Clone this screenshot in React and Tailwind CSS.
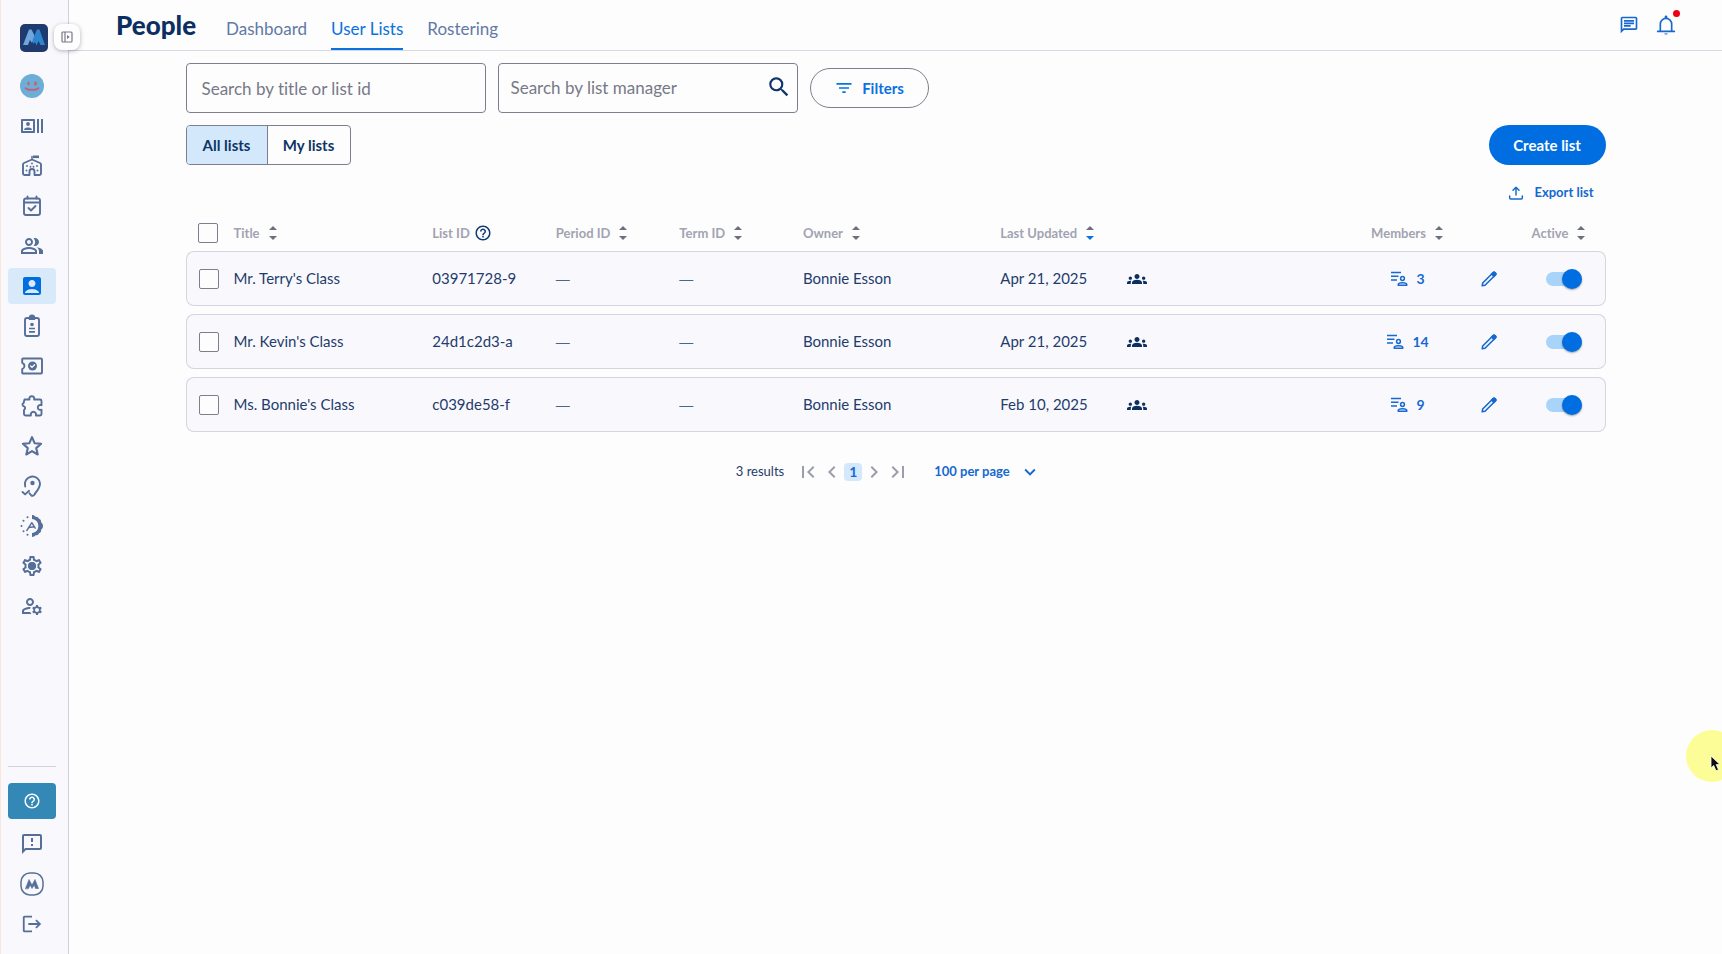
import React from "react";
import {
  MdOutlineRecentActors, MdOutlinePeopleAlt, MdAccountBox,
  MdOutlineSettings, MdOutlineManageAccounts, MdHelpOutline,
  MdOutlineFeedback, MdLogout, MdGroups, MdFilterList, MdSearch, MdOutlineChat,
  MdFirstPage, MdLastPage, MdChevronLeft, MdChevronRight, MdExpandMore,
} from "react-icons/md";

function Svg({ size = 24, children, className = "" }) {
  return (
    <svg width={size} height={size} viewBox="0 0 24 24" fill="none" stroke="currentColor" strokeWidth="2" strokeLinecap="round" strokeLinejoin="round" className={className} aria-hidden="true">
      {children}
    </svg>
  );
}

const CampusIcon = () => (
  <Svg>
    <path d="M9.5 21H4.5a1.500 1.500 0 0 1-1.500-1.500V10.500c0-.7.400-1.200 1-1.500L12 5.500 20 9c.6.300 1 .8 1 1.500v9a1.500 1.500 0 0 1-1.500 1.500h-5v-3.500a2.500 2.500 0 0 0-5 0V21Z" strokeWidth="1.900" />
    <path d="M12 5.500V2.500" strokeWidth="1.500" />
    <path d="M13 1.500h6v2.600h-6z" fill="currentColor" stroke="none" />
    <path d="M7 12h.01M12 9.500h.01M17 12h.01M10.500 12.800h.01M13.500 12.800h.01M6.500 16.500h.01M17.500 16.500h.01" strokeWidth="1.900" />
  </Svg>
);

const CalendarCheckIcon = () => (
  <Svg>
    <rect x="4" y="4.500" width="16" height="16.500" rx="2" strokeWidth="1.900" />
    <path d="M4 8.500h16M7.500 2.500v2M16.500 2.500v2" strokeWidth="1.900" />
    <path d="m8.500 14 2.500 2.500 4.500-4.500" strokeWidth="1.900" />
  </Svg>
);

const BadgeIcon = () => (
  <Svg>
    <rect x="5" y="4" width="14" height="18" rx="2" strokeWidth="1.900" />
    <path d="M8.800 6V3.600a3.200 3.200 0 0 1 6.400 0V6z" fill="currentColor" stroke="none" />
    <circle cx="12" cy="10.500" r="1.800" fill="currentColor" stroke="none" />
    <path d="M9 14.500h6M9 17.800h6" strokeWidth="1.700" strokeLinecap="butt" />
  </Svg>
);

const TicketIcon = () => (
  <Svg>
    <path d="M3 4.500h18a1 1 0 0 1 1 1v13a1 1 0 0 1-1 1H3a.8.8 0 0 1-.8-.8v-3.500c3-1.200 3-5.200 0-6.400V5.300c0-.5.300-.8.800-.8Z" strokeWidth="1.900" />
    <circle cx="12.500" cy="12" r="4.500" fill="currentColor" stroke="none" />
    <path d="m10.600 12 1.400 1.400 2.600-2.700" stroke="#f9f9fd" strokeWidth="1.300" />
  </Svg>
);

const PuzzleIcon = () => (
  <Svg>
    <path d="M4.500 5.500h5c-.7-2 .6-3.300 2.300-3.300s3 1.300 2.300 3.300h6a1.400 1.400 0 0 1 1.400 1.400v4.300c-2-.8-3.700.4-3.700 2.200s1.700 3 3.700 2.300v4.400a1.400 1.400 0 0 1-1.400 1.400h-4.200c.5-2-.7-3.700-2.500-3.700s-3 1.700-2.500 3.700H5.500A1.500 1.500 0 0 1 4 20v-4c1.500-.9 1.500-3 0-3.600-2-.7-2-2.700-.4-3.300Z" strokeWidth="1.900" />
  </Svg>
);

const StarIcon = () => (
  <Svg>
    <path d="m12 3.200 2.600 6 6.500.6-4.900 4.300 1.500 6.400-5.700-3.400-5.700 3.400 1.500-6.400-4.900-4.300 6.500-.6Z" strokeWidth="2.100" />
  </Svg>
);

const EarPinIcon = () => (
  <Svg>
    <path d="M5.200 12.500A7.600 7.600 0 1 1 20 9.500c0 4.800-3.500 7.500-5.700 11.300-.8 1.300-2.300 1.200-3.200.4-.6-.6-1.200-1.300-1.600-2" strokeWidth="1.900" />
    <circle cx="12.500" cy="9" r="2.200" fill="currentColor" stroke="none" />
    <path d="m2.500 18 2.600 2.400 4-3.600" strokeWidth="1.900" />
  </Svg>
);

const AutoModeIcon = () => (
  <Svg>
    <path d="M12 1c1.500 0 2.800.6 3.500 1.700 1.400-.3 2.900.4 3.500 2 1.600.6 2.300 1.900 2.100 3.500 1.100.8 1.900 2.200 1.900 3.800s-.8 3-1.900 3.800c.2 1.600-.5 2.900-2.100 3.500-.6 1.600-2.100 2.300-3.500 2-.7 1.100-2 1.700-3.500 1.700v-4c8.500-.5 8.500-13.500 0-14Z" fill="currentColor" stroke="none" />
    <path d="M7.500 3.200h.01M3.500 6.800h.01M1.500 12h.01M3.500 17.200h.01M7.500 20.800h.01" strokeWidth="2" />
    <path d="m6.800 16.500 5-7.800 3.400 5.500M9 13.500l5-.8" strokeWidth="1.400" />
  </Svg>
);

const SettingsIcon = () => (
  <span className="relative block">
    <MdOutlineSettings size={24} />
    <span className="absolute inset-0 m-auto size-2 rounded-full bg-current" />
  </span>
);

const MarkIcon = () => (
  <Svg>
    <rect x="1" y="1" width="22" height="22" rx="9" strokeWidth="1.500" />
    <path d="M5.500 16.500 9 7.500l3 5.500 3-5.500 3.500 9h-3l-1.200-3.500L12 16.500l-1.800-3.500-1.700 3.500Z" fill="currentColor" strokeWidth=".6" />
  </Svg>
);

const BellIcon = () => (
  <Svg size={22}>
    <path d="M5.800 18.500V11a6.200 6.200 0 0 1 12.400 0v7.500" strokeWidth="1.800" />
    <path d="M3 19h18" strokeWidth="2" />
    <path d="M10.500 4.500V3a1.500 1.500 0 0 1 3 0v1.500zM10 21.300h4c-.4 1.500-3.600 1.500-4 0Z" fill="currentColor" stroke="none" />
  </Svg>
);

const UploadIcon = () => (
  <Svg size={16}>
    <path d="M2.500 16.500v3a1.500 1.500 0 0 0 1.500 1.500h16a1.500 1.500 0 0 0 1.500-1.500v-3" strokeWidth="2.200" />
    <path d="M12 15V3.500M7.500 8 12 3.500 16.500 8" strokeWidth="2.200" />
  </Svg>
);

const MemberListIcon = () => (
  <svg width="18" height="18" viewBox="0 0 18 18" fill="none" stroke="currentColor" strokeWidth="1.500" aria-hidden="true">
    <path d="M1 2.500h10M1 6.200h7.500M1 10h6" />
    <circle cx="12.500" cy="8.500" r="1.900" />
    <path d="M8.200 15.300v-.6c0-1.300 2-2 4.300-2s4.300.7 4.300 2v.6Z" strokeLinejoin="round" />
  </svg>
);

const PencilIcon = () => (
  <svg width="16" height="16" viewBox="0 0 16 16" fill="none" stroke="currentColor" strokeWidth="1.600" strokeLinejoin="round" aria-hidden="true">
    <path d="M1.200 14.800 1.700 12 12 1.700a1.300 1.300 0 0 1 1.800 0l.5.500a1.300 1.300 0 0 1 0 1.800L4 14.300Z" />
    <path d="m10.600 3.100 1.600-1.600c.5-.5 1.200-.5 1.700 0l.6.600c.5.500.5 1.200 0 1.700L12.900 5.400Z" fill="currentColor" />
  </svg>
);

const PanelIcon = () => (
  <svg width="12" height="12" viewBox="0 0 12 12" fill="none" stroke="currentColor" aria-hidden="true">
    <rect x="1" y="1" width="10" height="10" rx="1" strokeWidth="1.200" />
    <path d="M4 1v10" strokeWidth="1.200" />
    <path d="M6 4v4l2.700-2z" fill="currentColor" stroke="none" />
  </svg>
);

const Logo = () => (
  <svg width="28" height="28" viewBox="0 0 28 28" aria-hidden="true">
    <rect width="28" height="28" rx="5" fill="#1f3a6e" />
    <path d="m3 21 6-15.500h2.500l3.500 7-3 6.500-2-3L8 21Z" fill="#6fa6dc" />
    <path d="m12.500 16 4.500-10.500h2.500L25 21h-4.500L18.500 17l-2 4.500-1.500-3.500-1.500 2Z" fill="#2f84cf" />
  </svg>
);

const Avatar = () => (
  <svg width="24" height="24" viewBox="0 0 24 24" aria-hidden="true">
    <circle cx="12" cy="12" r="12" fill="#6bafd6" />
    <path d="M8.500 7.500v4M15.500 7.500v4M7 9.500h3M14 8.500l3 2M17 8.500l-3 2" stroke="#cf5a78" strokeWidth="1.200" />
    <path d="M5 13.500c2 3.300 12 3.300 14 0" fill="none" stroke="#cf5a78" strokeWidth="1.500" />
    <path d="M7 15.300h10" stroke="#cf5a78" strokeWidth="1" />
  </svg>
);

const navItems = [
  { label: "Profile", icon: <Avatar /> },
  { label: "Directory", icon: <MdOutlineRecentActors size={24} /> },
  { label: "Campus", icon: <CampusIcon /> },
  { label: "Calendar", icon: <CalendarCheckIcon /> },
  { label: "Groups", icon: <MdOutlinePeopleAlt size={24} /> },
  { label: "People", icon: <MdAccountBox size={24} />, active: true },
  { label: "Badges", icon: <BadgeIcon /> },
  { label: "Passes", icon: <TicketIcon /> },
  { label: "Extensions", icon: <PuzzleIcon /> },
  { label: "Favorites", icon: <StarIcon /> },
  { label: "Locations", icon: <EarPinIcon /> },
  { label: "Automations", icon: <AutoModeIcon /> },
  { label: "Settings", icon: <SettingsIcon /> },
  { label: "Account management", icon: <MdOutlineManageAccounts size={24} /> },
];

const footerItems = [
  { label: "Feedback", icon: <MdOutlineFeedback size={24} /> },
  { label: "About", icon: <MarkIcon /> },
  { label: "Log out", icon: <MdLogout size={22} /> },
];

function Sidebar() {
  return (
    <aside className="relative flex w-[69px] shrink-0 flex-col border-x border-r-[#cfd0da] border-l-[#fce6dc] bg-[#f9f9fd] pt-6 pb-3 pl-[7px]">
      <a href="#home" aria-label="Home" className="ml-3 w-7"><Logo /></a>
      <button aria-label="Expand sidebar" className="absolute top-6 -right-3 z-10 flex size-[26px] items-center justify-center rounded-lg bg-[#fdfdfd] text-[#77798a] shadow-[0_1px_4px_rgba(40,40,70,0.35)]">
        <PanelIcon />
      </button>
      <nav aria-label="Main" className="mt-4 flex w-12 flex-1 flex-col gap-1">
        {navItems.map((item) => (
          <a key={item.label} href="#nav" aria-label={item.label}
            className={item.active
              ? "flex h-9 items-center justify-center rounded bg-[#d8eafa] text-[#006ee0]"
              : "flex h-9 items-center justify-center text-[#566f98]"}>
            {item.icon}
          </a>
        ))}
      </nav>
      <div className="flex w-12 flex-col gap-1 border-t border-[#cfd3df] pt-4">
        <button aria-label="Help" className="mb-[3px] flex h-9 items-center justify-center rounded bg-[#3388b6] text-white">
          <MdHelpOutline size={18} />
        </button>
        {footerItems.map((item) => (
          <a key={item.label} href="#nav" aria-label={item.label} className="flex h-9 items-center justify-center text-[#566f98]">
            {item.icon}
          </a>
        ))}
      </div>
    </aside>
  );
}

function Header() {
  return (
    <header className="flex h-[51px] items-stretch border-b border-[#d5d8e0] pr-[45px] pl-[47px]">
      <h1 className="mr-[30px] flex items-center text-[26px] font-black text-[#0c2f62]">People</h1>
      <nav aria-label="People sections" className="flex gap-6 text-[17px] text-[#6079a6]">
        <a href="#dashboard" className="flex items-center border-b-2 border-transparent pt-2.5">Dashboard</a>
        <a href="#lists" aria-current="page" className="flex items-center border-b-2 border-[#0a72e0] pt-2.5 text-[#0a72e0]">User Lists</a>
        <a href="#rostering" className="flex items-center border-b-2 border-transparent pt-2.5">Rostering</a>
      </nav>
      <div className="ml-auto flex items-center gap-4 text-[#1569d0]">
        <button aria-label="Messages"><MdOutlineChat size={20} /></button>
        <button aria-label="Notifications" className="relative">
          <BellIcon />
          <span className="absolute -top-1 -right-[3px] size-[7px] rounded-full bg-[#ee0011]" />
        </button>
      </div>
    </header>
  );
}

function SortIcon({ down = false }) {
  return (
    <svg width="10" height="16" viewBox="0 0 10 16" aria-hidden="true">
      <path d="M1 5 5 1l4 4Z" fill="#6d6f7e" />
      <path d="M1 11 5 15l4-4Z" fill={down ? "#0a72e0" : "#6d6f7e"} />
    </svg>
  );
}

function SortHeader({ label, down, center }) {
  return (
    <button className={center
      ? "mx-auto flex items-center gap-2 font-bold whitespace-nowrap"
      : "flex items-center gap-2 font-bold whitespace-nowrap"}>
      {label}
      <SortIcon down={down} />
    </button>
  );
}

const box = "block size-5 appearance-none rounded-xs border border-[#7d7f8e] bg-[#fdfdfd] checked:bg-[#006ee0]";

const lists = [
  { title: "Mr. Terry's Class", id: "03971728-9", owner: "Bonnie Esson", updated: "Apr 21, 2025", members: 3 },
  { title: "Mr. Kevin's Class", id: "24d1c2d3-a", owner: "Bonnie Esson", updated: "Apr 21, 2025", members: 14 },
  { title: "Ms. Bonnie's Class", id: "c039de58-f", owner: "Bonnie Esson", updated: "Feb 10, 2025", members: 9 },
];

function ListTable() {
  const cell = "border-y border-[#d3d5e0] p-0";
  const dash = "border-y border-[#d3d5e0] p-0 font-['Liberation_Sans',sans-serif] text-sm text-[#4a6590]";
  return (
    <table className="w-full table-fixed border-separate border-spacing-x-0 border-spacing-y-2 text-left text-[15px] text-[#1f3c6c]">
      <colgroup>
        <col className="w-12" />
        <col className="w-[14%]" />
        <col className="w-[8.7%]" />
        <col className="w-[8.7%]" />
        <col className="w-[8.7%]" />
        <col className="w-[13.9%]" />
        <col className="w-[7.8%]" />
        <col />
        <col className="w-[114px]" />
        <col className="w-12" />
        <col className="w-[93px]" />
      </colgroup>
      <thead>
        <tr className="h-5 text-[13px] leading-5 text-[#a2a3b2]">
          <th className="p-0 pl-3"><input type="checkbox" aria-label="Select all lists" className={box} /></th>
          <th className="p-0"><SortHeader label="Title" /></th>
          <th className="p-0">
            <div className="flex items-center gap-1">
              List ID
              <button aria-label="About list ID" className="text-[#0f3a73]"><MdHelpOutline size={18} /></button>
            </div>
          </th>
          <th className="p-0"><SortHeader label="Period ID" /></th>
          <th className="p-0"><SortHeader label="Term ID" /></th>
          <th className="p-0"><SortHeader label="Owner" /></th>
          <th className="p-0" colSpan={2}><SortHeader label="Last Updated" down /></th>
          <th className="p-0"><SortHeader label="Members" center /></th>
          <td className="p-0" />
          <th className="p-0"><SortHeader label="Active" center /></th>
        </tr>
      </thead>
      <tbody>
        {lists.map((list) => (
          <tr key={list.id} className="h-[55px] bg-[#f9f9fd]">
            <td className="rounded-l-lg border-y border-l border-[#d3d5e0] p-0 pl-3">
              <input type="checkbox" aria-label={`Select ${list.title}`} className={box} />
            </td>
            <td className={cell}>{list.title}</td>
            <td className={cell}>{list.id}</td>
            <td className={dash}>—</td>
            <td className={dash}>—</td>
            <td className={cell}>{list.owner}</td>
            <td className={cell}>{list.updated}</td>
            <td className="border-y border-[#d3d5e0] p-0 pl-4 text-[#0c2f62]"><MdGroups size={20} /></td>
            <td className={cell}>
              <a href="#members" className="flex items-center justify-center gap-2 text-sm font-bold text-[#1569d0]">
                <MemberListIcon />
                {list.members}
              </a>
            </td>
            <td className={cell}>
              <button aria-label={`Edit ${list.title}`} className="mx-auto block text-[#1569d0]"><PencilIcon /></button>
            </td>
            <td className="rounded-r-lg border-y border-r border-[#d3d5e0] p-0 pl-[33px]">
              <label className="flex h-5 w-9 items-center">
                <input type="checkbox" defaultChecked role="switch" aria-label={`${list.title} active`} className="peer sr-only" />
                <span className="flex h-[14px] w-9 items-center rounded-full bg-[#a9d4fa] peer-checked:justify-end">
                  <span className="size-5 rounded-full bg-[#006ee0] shadow-[0_1px_2px_rgba(0,0,0,0.35)]" />
                </span>
              </label>
            </td>
          </tr>
        ))}
      </tbody>
    </table>
  );
}

function Pagination() {
  return (
    <nav aria-label="Pagination" className="mt-5 flex items-center justify-center pr-3.5 text-[13px] text-[#1f3c6c]">
      <span className="mr-3">3 results</span>
      <div className="flex items-center text-[#9b9dab]">
        <button aria-label="First page"><MdFirstPage size={24} /></button>
        <button aria-label="Previous page"><MdChevronLeft size={24} /></button>
        <button aria-current="page" className="h-[18px] w-[18px] rounded bg-[#d3e9fb] text-sm leading-[18px] font-bold text-[#1569d0]">1</button>
        <button aria-label="Next page"><MdChevronRight size={24} /></button>
        <button aria-label="Last page"><MdLastPage size={24} /></button>
      </div>
      <div className="relative ml-6 flex items-center text-[#1569d0]">
        <select aria-label="Rows per page" className="w-[107px] appearance-none bg-transparent pr-6 font-bold" defaultValue="100">
          <option value="25">25 per page</option>
          <option value="50">50 per page</option>
          <option value="100">100 per page</option>
        </select>
        <MdExpandMore size={22} className="pointer-events-none absolute right-0" />
      </div>
    </nav>
  );
}

export default function App() {
  return (
    <div className="relative flex min-h-screen overflow-hidden bg-[#fdfdfd] font-['Lato',sans-serif] [font-variant-ligatures:no-common-ligatures]">
      <Sidebar />
      <div className="flex min-w-0 flex-1 flex-col">
        <Header />
        <main className="mx-auto w-full max-w-[1420px] pt-3">
          <div className="flex items-center gap-3">
            <input type="text" aria-label="Search by title or list id" placeholder="Search by title or list id"
              className="h-[50px] w-[300px] rounded border border-[#7d7f8e] bg-transparent px-[15px] text-[17px] text-[#1f3c6c] placeholder:text-[#777988]" />
            <div className="flex h-[50px] w-[300px] items-center rounded border border-[#7d7f8e] pr-[5px] pl-3">
              <input type="text" aria-label="Search by list manager" placeholder="Search by list manager"
                className="min-w-0 flex-1 bg-transparent text-[17px] text-[#1f3c6c] placeholder:text-[#777988]" />
              <button aria-label="Search" className="pb-0.5 text-[#0f3468]"><MdSearch size={26} /></button>
            </div>
            <button className="flex h-10 w-[119px] items-center justify-center gap-2 rounded-full border border-[#7d7f8e] text-[15px] font-bold text-[#0a72e0]">
              <MdFilterList size={20} />
              Filters
            </button>
          </div>
          <div className="mt-3 flex items-center justify-between">
            <div className="flex h-10 overflow-hidden rounded border border-[#7d7f8e] text-[15px] font-bold text-[#0f3468]">
              <button aria-pressed="true" className="w-[81px] border-r border-[#7d7f8e] bg-[#d3e9fb]">All lists</button>
              <button aria-pressed="false" className="w-[82px]">My lists</button>
            </div>
            <button className="h-10 w-[117px] rounded-full bg-[#006ee0] text-[15px] font-bold text-white">Create list</button>
          </div>
          <div className="mt-3 mb-1.5 flex justify-end pr-3">
            <button className="flex h-8 items-center gap-2.5 text-[13px] font-bold text-[#1569d0]">
              <UploadIcon />
              Export list
            </button>
          </div>
          <ListTable />
          <Pagination />
        </main>
      </div>
      <div className="pointer-events-none absolute top-[730px] -right-4 size-[52px] rounded-full bg-[#fdfd98]">
        <svg width="14" height="20" viewBox="0 0 14 20" className="absolute top-[25px] left-6" aria-hidden="true">
          <path d="M1 1v12l2.700-2.500 2.300 5.300 2.500-1-2.300-5.200H10Z" fill="#0b0b12" stroke="#fff" strokeWidth=".8" />
        </svg>
      </div>
    </div>
  );
}
